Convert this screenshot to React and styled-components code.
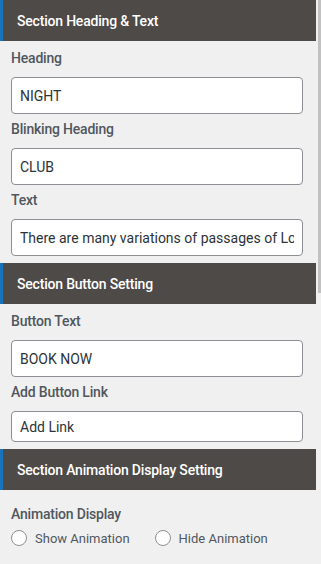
import React from "react";
import styled, { createGlobalStyle } from "styled-components";

const GlobalStyle = createGlobalStyle`
  html, body {
    margin: 0;
    padding: 0;
    background: #f0f0f0;
    font-family: Roboto, "Liberation Sans", sans-serif;
  }
`;

const Frame = styled.div`
  display: flex;
  width: 321px;
  height: 564px;
  overflow: hidden;
  background: #f0f0f0;
`;

const Panel = styled.div`
  flex: 0 0 316px;
  display: flex;
  flex-direction: column;
`;

const ScrollTrack = styled.div`
  flex: 0 0 5px;
  display: flex;
  justify-content: flex-end;
  background: #f0f0f0;
`;

const ScrollThumb = styled.div`
  width: 3px;
  height: 293px;
  background: #c1c1c1;
`;

const SectionHeader = styled.div`
  height: 41px;
  display: flex;
  align-items: center;
  padding-left: 14px;
  background: #4e4a48;
  border-left: 3px solid #1a72b8;
  color: #ffffff;
  font-size: 14px;
  font-weight: 500;
  letter-spacing: -0.2px;
`;

const SectionBody = styled.div`
  display: flex;
  flex-direction: column;
  padding: ${(p) => p.$pad || "8px 13px 7px 11px"};
`;

const Label = styled.div`
  font-size: 14px;
  font-weight: 500;
  line-height: 18px;
  color: #50575e;
  letter-spacing: -0.2px;
  margin-bottom: 10px;
`;

const Field = styled.div`
  display: flex;
  flex-direction: column;
  & + & {
    margin-top: 6px;
  }
`;

const Input = styled.input`
  box-sizing: border-box;
  width: 292px;
  height: ${(p) => p.$h || 37}px;
  border: 1px solid #8c8f94;
  border-radius: 4px;
  background: #ffffff;
  padding: 0 8px;
  font-family: Roboto, "Liberation Sans", sans-serif;
  font-size: 14px;
  color: #2c3338;
  outline: none;
`;

const RadioRow = styled.div`
  display: flex;
  align-items: center;
  gap: 25px;
  margin-top: -3px;
`;

const RadioOption = styled.label`
  display: flex;
  align-items: center;
  gap: 8px;
  font-size: 13px;
  color: #50575e;
`;

const RadioCircle = styled.span`
  box-sizing: border-box;
  width: 16px;
  height: 16px;
  border: 1px solid #8c8f94;
  border-radius: 50%;
  background: #ffffff;
`;

export default function App() {
  return (
    <>
      <GlobalStyle />
      <Frame>
        <Panel>
          <SectionHeader>Section Heading &amp; Text</SectionHeader>
          <SectionBody>
            <Field>
              <Label>Heading</Label>
              <Input defaultValue="NIGHT" />
            </Field>
            <Field>
              <Label>Blinking Heading</Label>
              <Input defaultValue="CLUB" />
            </Field>
            <Field>
              <Label>Text</Label>
              <Input defaultValue="There are many variations of passages of Lorem Ipsum available" />
            </Field>
          </SectionBody>
          <SectionHeader>Section Button Setting</SectionHeader>
          <SectionBody>
            <Field>
              <Label>Button Text</Label>
              <Input defaultValue="BOOK NOW" />
            </Field>
            <Field>
              <Label>Add Button Link</Label>
              <Input $h={31} defaultValue="Add Link" />
            </Field>
          </SectionBody>
          <SectionHeader>Section Animation Display Setting</SectionHeader>
          <SectionBody $pad="15px 13px 7px 11px">
            <Label>Animation Display</Label>
            <RadioRow>
              <RadioOption>
                <RadioCircle />
                Show Animation
              </RadioOption>
              <RadioOption>
                <RadioCircle />
                Hide Animation
              </RadioOption>
            </RadioRow>
          </SectionBody>
        </Panel>
        <ScrollTrack>
          <ScrollThumb />
        </ScrollTrack>
      </Frame>
    </>
  );
}
